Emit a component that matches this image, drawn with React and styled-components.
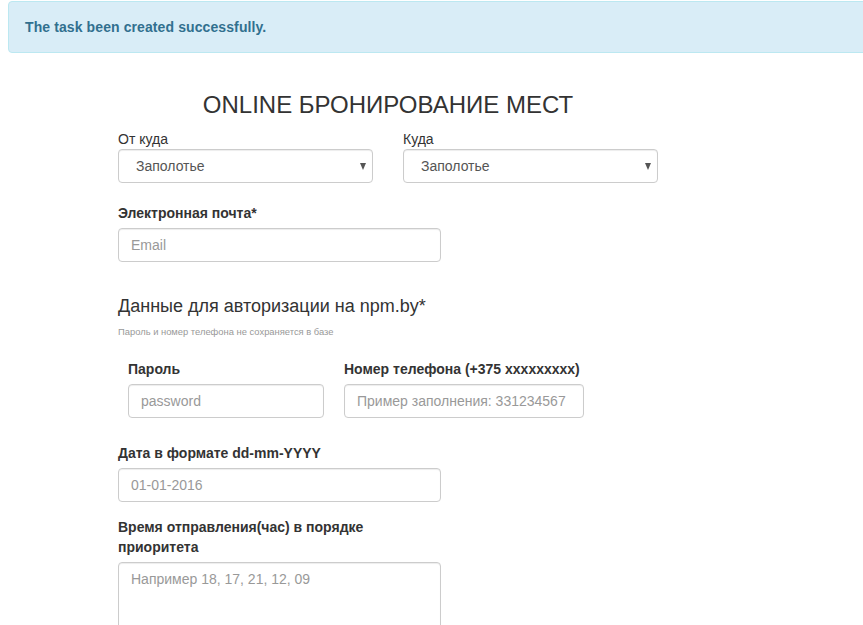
import React from 'react';
import styled, { createGlobalStyle } from 'styled-components';

const GlobalStyle = createGlobalStyle`
  html, body {
    margin: 0;
    padding: 0;
    background: #fff;
    overflow: hidden;
  }
  body {
    font-family: "Liberation Sans", Arial, sans-serif;
    font-size: 14px;
    line-height: 20px;
    color: #333;
  }
  * { box-sizing: border-box; }
`;

const Alert = styled.div`
  margin: 1px 0 0 8px;
  width: 880px;
  padding: 15px 16px;
  background: #d9edf7;
  border: 1px solid #bce8f1;
  border-radius: 4px;
  color: #31708f;
  font-weight: bold;
  line-height: 20px;
  letter-spacing: 0.1px;
`;

const Container = styled.div`
  width: 570px;
  margin-left: 103px;
  padding: 0 15px;
`;

const Title = styled.h3`
  margin: 39px 0 0;
  font-size: 24px;
  font-weight: normal;
  line-height: 26px;
  text-align: center;
`;

const Row = styled.div`
  display: flex;
  gap: ${p => p.gap || 0}px;
  padding-left: ${p => p.indent || 0}px;
  margin-top: ${p => p.top || 0}px;
`;

const Field = styled.div`
  width: ${p => p.width}px;
  margin-top: ${p => p.top || 0}px;
`;

const Label = styled.label`
  display: block;
  font-weight: ${p => (p.light ? 'normal' : 'bold')};
  margin-bottom: ${p => (p.light ? 0 : 5)}px;
  line-height: 20px;
`;

const fieldBase = `
  display: block;
  width: 100%;
  height: 34px;
  padding: 6px 12px;
  font-family: "Liberation Sans", Arial, sans-serif;
  font-size: 14px;
  line-height: 20px;
  color: #555;
  background: #fff;
  border: 1px solid #ccc;
  border-radius: 4px;
  box-shadow: inset 0 1px 1px rgba(0, 0, 0, 0.075);
  outline: none;
  &::placeholder { color: #999; }
`;

const Input = styled.input`
  ${fieldBase}
`;

const TextArea = styled.textarea`
  ${fieldBase}
  height: 80px;
  resize: none;
`;

const SelectWrap = styled.div`
  position: relative;
`;

const Select = styled.select`
  ${fieldBase}
  appearance: none;
  padding-left: 17px;
`;

const Caret = styled.span`
  position: absolute;
  right: 7px;
  top: 14px;
  width: 0;
  height: 0;
  border-left: 3.5px solid transparent;
  border-right: 3.5px solid transparent;
  border-top: 7px solid #555;
  pointer-events: none;
`;

const Section = styled.h4`
  margin: 34px 0 0;
  font-size: 18px;
  font-weight: normal;
  line-height: 20px;
`;

const Hint = styled.div`
  margin-top: 10px;
  font-size: 9.4px;
  line-height: 12px;
  color: #999;
`;

function CitySelect({ label }) {
  return (
    <Field width={255}>
      <Label light>{label}</Label>
      <SelectWrap>
        <Select defaultValue="Заполотье">
          <option>Заполотье</option>
        </Select>
        <Caret />
      </SelectWrap>
    </Field>
  );
}

export default function App() {
  return (
    <>
      <GlobalStyle />
      <Alert>The task been created successfully.</Alert>
      <Container>
        <Title>ONLINE БРОНИРОВАНИЕ МЕСТ</Title>
        <Row gap={30} top={11}>
          <CitySelect label="От куда" />
          <CitySelect label="Куда" />
        </Row>
        <Field width={323} top={20}>
          <Label>Электронная почта*</Label>
          <Input placeholder="Email" />
        </Field>
        <Section>Данные для авторизации на npm.by*</Section>
        <Hint>Пароль и номер телефона не сохраняется в базе</Hint>
        <Row gap={20} indent={10} top={21}>
          <Field width={196}>
            <Label>Пароль</Label>
            <Input placeholder="password" />
          </Field>
          <Field width={240}>
            <Label>Номер телефона (+375 xxxxxxxxx)</Label>
            <Input placeholder="Пример заполнения: 331234567" />
          </Field>
        </Row>
        <Field width={323} top={25}>
          <Label>Дата в формате dd-mm-YYYY</Label>
          <Input placeholder="01-01-2016" />
        </Field>
        <Field width={323} top={15}>
          <Label>Время отправления(час) в порядке приоритета</Label>
          <TextArea placeholder="Например 18, 17, 21, 12, 09" />
        </Field>
      </Container>
    </>
  );
}
